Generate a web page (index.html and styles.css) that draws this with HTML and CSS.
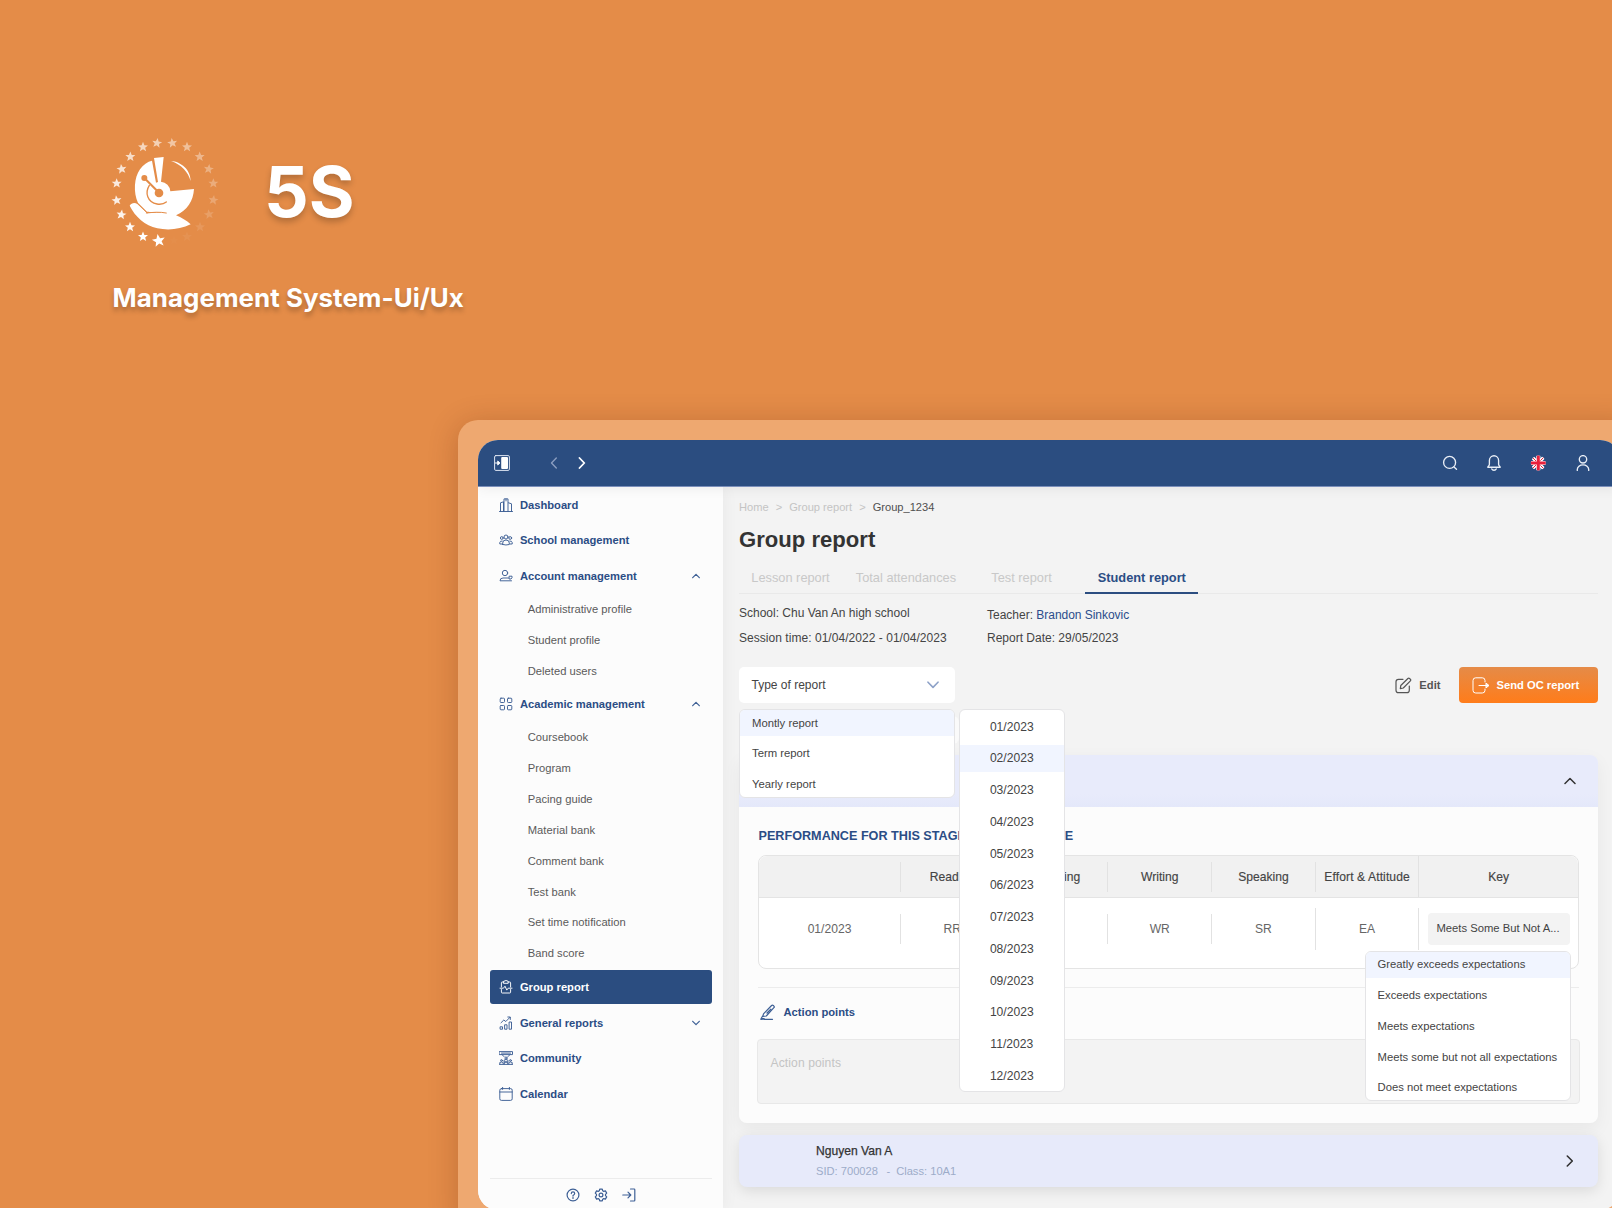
FILE: index.html
```html
<!DOCTYPE html>
<html lang="en">
<head>
<meta charset="utf-8">
<title>5S Management System</title>
<link rel="stylesheet" href="styles.css">
</head>
<body>
<div class="stage">
  <header class="brand">
    <div class="brand-row">
      <svg class="brand-logo" viewBox="0 0 390 375" fill="#fff">
        <defs>
          <path id="star" d="M0-15.500 4.200-5 15-4.700 6.500 2.300 9.400 12.800 0 6.800 -9.400 12.800 -6.500 2.300 -15-4.700 -4.200-5Z"/>
        </defs>
        <use href="#star" transform="translate(171 39) rotate(8)" opacity=".6"/>
        <use href="#star" transform="translate(217 39) rotate(-8)" opacity=".5"/>
        <use href="#star" transform="translate(261 51)" opacity=".45"/>
        <use href="#star" transform="translate(299 80)" opacity=".38"/>
        <use href="#star" transform="translate(326 117) rotate(8)" opacity=".32"/>
        <use href="#star" transform="translate(340 160)" opacity=".28"/>
        <use href="#star" transform="translate(340 210) rotate(8)" opacity=".23"/>
        <use href="#star" transform="translate(327 253) rotate(-8)" opacity=".17"/>
        <use href="#star" transform="translate(300 291)" opacity=".11"/>
        <use href="#star" transform="translate(261 320)" opacity=".06"/>
        <use href="#star" transform="translate(222 331)" opacity=".02"/>
        <use href="#star" transform="translate(176 332) rotate(-10) scale(1.3)"/>
        <use href="#star" transform="translate(129 320)"/>
        <use href="#star" transform="translate(90 291)" opacity=".95"/>
        <use href="#star" transform="translate(64 254) rotate(8)" opacity=".9"/>
        <use href="#star" transform="translate(50 211) rotate(-8)" opacity=".86"/>
        <use href="#star" transform="translate(50 160)" opacity=".82"/>
        <use href="#star" transform="translate(65 117) rotate(-8)" opacity=".77"/>
        <use href="#star" transform="translate(91 80)" opacity=".7"/>
        <use href="#star" transform="translate(129 51)" opacity=".65"/>
        <path d="M162 84 191 81 183 155A31 31 0 0 1 211 184L282 177C280 213 262 241 228 256 244 263 260 272 272 283 242 298 205 302 172 295 135 286 106 261 89 227 94 219 104 217 112 222L141 249 196 246C170 246 150 246 141 245L114 219C100 188 102 143 120 118 129 104 143 95 156 92L168 158 174 156Z"/>
        <path d="M213 93C243 95 272 119 272 153 264 126 245 104 213 93Z"/>
        <g fill="none" stroke="#e48c48">
          <path d="M133 144 175 186" stroke-width="6"/>
          <path d="M148 166C134 188 142 217 171 222 183 224 194 220 199 216" stroke-width="4"/>
          <path d="M139 249C158 247 180 245 199 249" stroke-width="3"/>
          <path d="M114 221 141 249" stroke-width="2.5"/>
        </g>
        <circle cx="133" cy="144" r="9" fill="#e48c48"/>
        <circle cx="177" cy="189" r="13" fill="#e48c48"/>
      </svg>
      <h1 class="brand-name">5S</h1>
    </div>
    <p class="brand-tagline">Management System-Ui/Ux</p>
  </header>

  <div class="device">
    <div class="screen">
      <nav class="topbar">
        <svg class="toggle" viewBox="0 0 16 16"><rect x=".6" y=".6" width="14.8" height="14.8" rx="1.2" fill="none" stroke="#dfe6f2" stroke-width="1"/><rect x="7.2" y="2" width="6.8" height="12" rx="1" fill="#fff"/><path d="M1.5 8h4M4 6.3 5.8 8 4 9.7Z" stroke="#fff" fill="#fff"/></svg>
        <svg class="arrow dim" viewBox="0 0 8 12"><path d="M6.3 1 1.5 6l4.8 5"/></svg>
        <svg class="arrow" viewBox="0 0 8 12"><path d="M1.5 1 6.3 6l-4.8 5"/></svg>
        <div class="topbar-actions">
          <svg viewBox="0 0 16 16"><circle cx="7.6" cy="7.4" r="6"/><path d="m12 12 2.5 2.3"/></svg>
          <svg viewBox="0 0 16 16"><path d="M1.8 12.2c0-.8 1.600-1.500 1.600-3V5.500a4.600 4.800 0 0 1 9.200 0v3.700c0 1.500 1.600 2.200 1.600 3zM5.800 14c.6 1.700 3.800 1.700 4.400 0"/></svg>
          <svg viewBox="0 0 16 16"><defs><clipPath id="disc"><circle cx="8.300" cy="8" r="7.500"/></clipPath></defs><g clip-path="url(#disc)" stroke="none"><path fill="#2b4d80" d="M0 0h16v16H0z"/><path d="m1 1 14 14M15 1 1 15" stroke="#fff" stroke-width="3.400"/><path d="m1 1 14 14M15 1 1 15" stroke="#e8203c" stroke-width="1"/><path d="M8.300 0v16M0 8h16" stroke="#fff" stroke-width="4.200"/><path d="M8.300 0v16M0 8h16" stroke="#e8203c" stroke-width="3"/></g></svg>
          <svg viewBox="0 0 16 16"><circle cx="8" cy="4.300" r="3.700"/><path d="M2.300 15.500v-1a5.700 4.600 0 0 1 11.400 0v1"/></svg>
        </div>
      </nav>

      <div class="layout">
        <aside class="sidebar">
          <a class="item"><svg viewBox="0 0 14 14"><path d="M.5 13.500h13M1.500 13.500V4.800L4.500 3.800v9.700M5 13.500V.900h4v12.600M9.500 4.800l3 1v7.700M7 .9v2"/></svg>Dashboard</a>
          <a class="item"><svg viewBox="0 0 14 14"><circle cx="7" cy="4" r="2"/><circle cx="2.800" cy="5" r="1.400"/><circle cx="11.200" cy="5" r="1.400"/><path d="M3.700 11.500V10a3.300 3 0 0 1 6.600 0v1.500q-3.300 1-6.600 0zM2.800 11H.8V9.500Q1 7.800 3.200 8M11.200 11h2V9.500Q13 7.800 10.800 8"/></svg>School management</a>
          <a class="item"><svg viewBox="0 0 14 14"><circle cx="6" cy="4" r="2.700"/><path d="M9.500 9H4Q1 9 1 11.800h11.500M10.500 7.200h2.500v1.500L12 10h-1.500z"/></svg>Account management<svg class="caret" viewBox="0 0 8 6"><path d="m.7 4.700 3.300-3.400 3.300 3.400"/></svg></a>
          <a class="sub">Administrative profile</a>
          <a class="sub">Student profile</a>
          <a class="sub">Deleted users</a>
          <a class="item"><svg viewBox="0 0 14 14"><rect x="1.200" y="1.200" width="4.300" height="4.300" rx=".8"/><rect x="8.500" y="1.200" width="4.300" height="4.300" rx=".8"/><rect x="1.200" y="8.500" width="4.300" height="4.300" rx=".8"/><rect x="8.500" y="8.500" width="4.300" height="4.300" rx=".8"/></svg>Academic management<svg class="caret" viewBox="0 0 8 6"><path d="m.7 4.700 3.300-3.400 3.300 3.400"/></svg></a>
          <a class="sub">Coursebook</a>
          <a class="sub">Program</a>
          <a class="sub">Pacing guide</a>
          <a class="sub">Material bank</a>
          <a class="sub">Comment bank</a>
          <a class="sub">Test bank</a>
          <a class="sub">Set time notification</a>
          <a class="sub">Band score</a>
          <a class="item active"><svg viewBox="0 0 14 14"><path d="M4.800 2H3.200Q2.400 2 2.400 2.800V7M9.200 2h1.600q.8 0 .8.800V7M2.400 9.500v2.700q0 .8.800.8h7.600q.8 0 .8-.8V9.500M4.800 1.300l2.200-.8 2.200.8v2H4.800zM1 8.200h3.500L6 6.200l1.800 3.900 1.400-1.900H13"/></svg>Group report</a>
          <a class="item"><svg viewBox="0 0 14 14"><path d="M1.500 10.800h2v2.400h-2zM6 8.800h2v4.400H6zM10.500 6h2v7.200h-2zM2 6.800 4.800 4l2 1.500L11 1.300M8.800 1H11.300v2.500"/></svg>General reports<svg class="caret" viewBox="0 0 8 6"><path d="m.7 1.300 3.300 3.400 3.300-3.400"/></svg></a>
          <a class="item"><svg viewBox="0 0 14 14"><path d="M.5.600h13v3H.5zM2.500 2.100h9M3 3.600l2 2M11 3.600l-2 2M.5 13.400h13M5 10.500V9.200q2-1.500 4 0v1.300zM.8 13V11.500q1.700-1 3.400 0V13M5.300 13v-1.500q1.700-1 3.400 0V13M9.800 13v-1.500q1.700-1 3.400 0V13"/><circle cx="7" cy="7" r="1.100"/><circle cx="2.500" cy="9.500" r=".9"/><circle cx="11.500" cy="9.500" r=".9"/></svg>Community</a>
          <a class="item"><svg viewBox="0 0 14 14"><rect x=".8" y="1.600" width="12.400" height="11.800" rx="1.600"/><path d="M.8 5h12.400M3.600.400v2M10.400.400v2"/></svg>Calendar</a>
          <footer class="sidebar-foot">
            <svg viewBox="0 0 14 14"><circle cx="7" cy="7" r="5.900"/><path d="M5.300 5.600q0-1.700 1.700-1.700t1.700 1.600q0 1-1.700 2v.6M7 9.400v1"/></svg>
            <svg viewBox="0 0 14 14"><path d="M5.700 1.200h2.600l.4 1.600 1.100.6 1.600-.5 1.300 2.200-1.200 1.200v1.400l1.200 1.200-1.300 2.200-1.600-.5-1.100.6-.4 1.600H5.700l-.4-1.600-1.100-.6-1.600.5-1.300-2.200 1.200-1.200V6.300L1.300 5.100l1.300-2.200 1.600.5 1.100-.6z"/><circle cx="7" cy="7" r="1.900"/></svg>
            <svg viewBox="0 0 14 14"><path d="M8.500 1h3.600q.7 0 .7.700v10.600q0 .7-.7.700H8.500M.8 7h8M6 4.200 8.800 7 6 9.800"/></svg>
          </footer>
        </aside>

        <main class="content">
          <div class="crumbs"><span>Home</span><span>&gt;</span><span>Group report</span><span>&gt;</span><b>Group_1234</b></div>
          <h2 class="title">Group report</h2>
          <div class="tabs"><a>Lesson report</a><a>Total attendances</a><a>Test report</a><a class="on">Student report</a></div>
          <div class="meta">
            <div><p class="school">School: Chu Van An high school</p><p class="session">Session time: 01/04/2022 - 01/04/2023</p></div>
            <div class="meta-right"><p>Teacher: <a>Brandon Sinkovic</a></p><p>Report Date: 29/05/2023</p></div>
          </div>
          <div class="toolbar">
            <div class="select">Type of report
              <svg viewBox="0 0 12 8"><path d="m1 1.200 5 5.200 5-5.200"/></svg>
              <ul class="menu menu-type"><li class="hot">Montly report</li><li>Term report</li><li>Yearly report</li></ul>
              <ul class="menu menu-month"><li>01/2023</li><li class="hot">02/2023</li><li>03/2023</li><li>04/2023</li><li>05/2023</li><li>06/2023</li><li>07/2023</li><li>08/2023</li><li>09/2023</li><li>10/2023</li><li>11/2023</li><li>12/2023</li></ul>
            </div>
            <a class="edit"><svg viewBox="0 0 17 17"><path d="M8 2.300H3.500Q1 2.300 1 4.800v8.400q0 2.500 2.500 2.500h8.300q2.500 0 2.500-2.500V9M5.800 8.500 12.900 1.500q.8-.8 1.700 0l.8.800q.8.800 0 1.600L8.300 11l-3 .6z"/></svg>Edit</a>
            <a class="send"><svg viewBox="0 0 18 17"><path d="M13 5V3.500Q13 .800 10.300.800H3.700Q1 .8 1 3.500v9.800Q1 16 3.700 16h6.600q2.700 0 2.700-2.700V12M7 8.500h8"/><path d="M14.300 6.300 17 8.500l-2.700 2.200z" fill="#fff"/></svg>Send OC report</a>
          </div>
          <div class="filter"></div>

          <section class="panel">
            <header class="panel-head"><svg viewBox="0 0 12 8"><path d="m1 6.500 5-5 5 5"/></svg></header>
            <div class="panel-body">
              <h3>PERFORMANCE FOR THIS STAGE OF THE COURSE</h3>
              <div class="table">
                <div class="row head"><span></span><span>Reading</span><span>Listening</span><span>Writing</span><span>Speaking</span><span class="full">Effort &amp; Attitude</span><span>Key</span></div>
                <div class="row"><span>01/2023</span><span>RR</span><span>LR</span><span>WR</span><span class="tall">SR</span><span class="tall">EA</span>
                  <div class="key"><div class="chip">Meets Some But Not A...</div>
                    <ul class="menu menu-key"><li class="hot">Greatly exceeds expectations</li><li>Exceeds expectations</li><li>Meets expectations</li><li>Meets some but not all expectations</li><li>Does not meet expectations</li></ul>
                  </div>
                </div>
              </div>
              <h4><svg viewBox="0 0 16 16"><path d="M4 15.300h8.500M.8 15.300l2.400-.1M2.800 11.800 1 14.700h3.200M3.500 9.800 11.600 1.500q.8-.8 1.700 0l.6.600q.8.800 0 1.600L6.300 12l-3.500.300zM7 9l3.800-3.900"/></svg>Action points</h4>
              <div class="textarea">Action points</div>
            </div>
          </section>

          <section class="student">
            <div><p class="name">Nguyen Van A</p><p class="sid">SID: 700028<span>-</span>Class: 10A1</p></div>
            <svg viewBox="0 0 8 12"><path d="m1.300 1 5 5-5 5"/></svg>
          </section>
        </main>
      </div>
    </div>
  </div>
</div>
</body>
</html>
```

FILE: styles.css
```css
* { box-sizing: border-box; margin: 0; padding: 0; }
body { width: 1612px; height: 1208px; overflow: hidden; background: #e48c48; font-family: "Liberation Sans", Arial, sans-serif; color: #333; }
svg { display: block; flex: none; fill: none; stroke-linecap: round; stroke-linejoin: round; }
.stage { width: 1612px; height: 1208px; overflow: hidden; }

.brand { height: 420px; padding: 130px 0 0 100px; color: #fff; font-family: Inter, sans-serif; }
.brand-row { display: flex; height: 125px; }
.brand-logo { width: 130px; height: 125px; fill: #fff; }
.brand-name { margin-left: 34px; font-size: 70px; font-weight: 700; line-height: 124px; text-shadow: 0 4px 6px rgba(0,0,0,.22); }
.brand-tagline { margin: 22px 0 0 12.500px; font-size: 25.900px; font-weight: 700; line-height: 41px; letter-spacing: .05px; text-shadow: 0 4px 5px rgba(0,0,0,.25); white-space: nowrap; }

.device { width: 1182px; height: 810px; margin-left: 458px; padding: 20px; border-radius: 20px; background: #eea870; box-shadow: 0 4px 30px rgba(80,20,0,.24); }
.screen { width: 1142px; height: 770px; border-radius: 20px; overflow: hidden; background: #f3f3f3; }
.topbar { position: relative; z-index: 2; display: flex; align-items: center; height: 47px; padding-left: 16px; background: #2b4d80; border-bottom: 1px solid #7b8fbb; box-shadow: 0 2px 12px rgba(0,0,0,.06); }
.toggle { width: 16px; height: 16px; }
.arrow { width: 8px; height: 12px; margin-left: 19.500px; stroke: #fff; stroke-width: 1.8; }
.arrow.dim { margin-left: 40px; stroke: #8a9dbf; stroke-width: 1.4; }
.topbar-actions { display: flex; gap: 28.2px; margin-left: auto; padding-right: 29.5px; }
.topbar-actions svg { width: 16px; height: 16px; stroke: #e9eef6; stroke-width: 1.35; }

.layout { display: flex; height: 723px; }
.sidebar { z-index: 1; width: 245px; padding: 0 11.500px 0 12px; display: flex; flex-direction: column; background: #fcfcfc; color: #2b4d85; box-shadow: 0 0 16px rgba(0,0,0,.05); }
.item { display: flex; align-items: center; flex: none; height: 35.6px; padding: 0 12px 0 8.700px; font-size: 11.2px; font-weight: 700; }
.item svg { width: 14px; height: 14px; margin-right: 7.200px; stroke: #3d5f95; stroke-width: .95; }
.item .caret { width: 8px; height: 6px; margin: 0 0 0 auto; stroke-width: 1.2; }
.item.active { height: 34.6px; margin: .5px 0; border-radius: 3px; background: #2b4d80; color: #fff; }
.item.active svg { stroke: #fff; }
.sub { flex: none; height: 30.9px; padding-left: 37.700px; font-size: 11.2px; line-height: 31.800px; color: #5a5a5a; letter-spacing: .02px; }
.sidebar-foot { display: flex; justify-content: center; gap: 14px; height: 32px; margin-top: auto; padding-top: 9px; border-top: 1px solid #ececec; }
.sidebar-foot svg { width: 14px; height: 14px; stroke: #3d5f95; stroke-width: 1.2; }

.content { flex: 1; padding: 10px 22px 0 16px; }
.crumbs { display: flex; gap: 7px; height: 20px; font-size: 11.12px; line-height: 20px; color: #c4c4c4; }
.crumbs b { font-weight: 400; color: #4f4f4f; }
.title { height: 28px; margin-top: 8px; font-size: 22.1px; line-height: 29px; }
.tabs { display: grid; grid-template-columns: 104.5px 135.5px 94px 113px; height: 41px; padding-left: 12.300px; border-bottom: 1px solid #e9e9e9; font-size: 12.8px; line-height: 49px; color: #c8c8c8; }
.tabs .on { height: 41px; border-bottom: 2px solid #2b4d80; line-height: 50px; text-align: center; font-weight: 700; color: #2b4d85; }
.meta { display: flex; height: 73px; padding-top: 9px; font-size: 12px; line-height: 20px; color: #444; }
.meta > div { width: 248px; }
.meta p { height: 20px; margin-bottom: 5px; white-space: nowrap; }
.meta .school { letter-spacing: 0; }
.meta .session { letter-spacing: .04px; }
.meta-right p { margin: 2px 0; }
.meta-right p:last-child { margin-top: 3px; }
.meta a { color: #2b4d8c; letter-spacing: -.04px; }
.toolbar { display: flex; align-items: center; height: 36px; font-size: 11.200px; }
.select { position: relative; z-index: 3; display: flex; align-items: center; justify-content: space-between; width: 216px; height: 36px; padding: 0 16.500px 0 12.500px; border-radius: 5px; background: #fff; font-size: 12px; color: #444; }
.select > svg { width: 12px; height: 8px; stroke: #8ea2c8; stroke-width: 1.6; }
.menu { position: absolute; list-style: none; overflow: hidden; border: 1px solid #e4e4e6; border-radius: 6px; background: #fff; font-size: 11.300px; color: #444; }
.menu li { height: 30.9px; padding-left: 12px; line-height: 31.400px; white-space: nowrap; }
.menu .hot { height: 26px; background: #f1f5ff; line-height: 25px; }
.menu-type { top: 42px; left: 0; width: 216px; height: 89px; }
.menu-type .hot { line-height: 26px; }
.menu-type .hot, .menu-key .hot { margin-bottom: 2.300px; }
.menu-month { top: 42px; left: 220px; width: 105.500px; height: 383px; font-size: 12.1px; text-align: center; }
.menu-month li { height: 31.7px; padding: 0; line-height: 32px; }
.menu-month li:first-child { margin-top: 1px; }
.menu-month .hot { height: 27.7px; margin: 2px 0; line-height: 27.700px; }
.edit { display: flex; align-items: center; gap: 7.500px; margin-left: auto; font-weight: 700; color: #555; }
.edit svg { width: 17px; height: 17px; stroke: #555; stroke-width: 1.2; }
.send { display: flex; align-items: center; gap: 7px; width: 139.500px; height: 36px; margin-left: 18px; padding-left: 13px; border-radius: 4px; background: linear-gradient(#e58b48, #ff7c1a); font-weight: 700; color: #fff; }
.send svg { width: 18px; height: 17px; stroke: #fff; stroke-width: 1; }
.filter { width: 220px; height: 28px; margin: 12.500px 0 11.500px; border-radius: 6px; background: #fafafa; }

.panel { border-radius: 8px; box-shadow: 0 6px 18px rgba(0,0,0,.05); }
.panel-head { display: flex; align-items: center; justify-content: flex-end; height: 52px; padding-right: 22px; border-radius: 8px 8px 0 0; background: linear-gradient(#e8ebfb 75%, #e4e8fa); }
.panel-head svg { width: 12px; height: 8px; stroke: #333; stroke-width: 1.5; }
.panel-body { height: 316px; padding: 19px 19px 0 19px; border-radius: 0 0 8px 8px; background: #fcfcfc; }
.panel h3 { height: 29px; padding-left: .5px; font-size: 12.640px; line-height: 20px; color: #2b4d85; }
.table { height: 114px; border: 1px solid #e4e4e4; border-radius: 8px; background: #fff; }
.row { display: grid; grid-template-columns: 142px repeat(5, 103.700px) 1fr; align-items: center; height: 61px; font-size: 12.1px; color: #666; }
.row > span { height: 30px; border-right: 1px solid #e2e2e2; line-height: 31px; text-align: center; }
.row > span:last-child { border: 0; }
.row > .tall { height: 42px; line-height: 43px; }
.row.head { height: 42px; border-bottom: 1px solid #e4e4e4; border-radius: 8px 8px 0 0; background: #f1f1f1; color: #444; -webkit-text-stroke: .15px #444; }
.row.head .full { height: 41px; line-height: 42px; letter-spacing: .1px; white-space: nowrap; }
.key { position: relative; padding-left: 9px; }
.chip { width: 142px; height: 32px; padding-left: 8px; border-radius: 4px; background: #f3f3f3; font-size: 11.250px; line-height: 31px; color: #444; white-space: nowrap; }
.menu-key { top: 38px; right: 7.500px; width: 206px; height: 150.500px; font-size: 11.280px; }
.panel h4 { display: flex; align-items: center; gap: 8px; height: 52px; margin-top: 18px; padding: 0 0 3px 1.500px; border-top: 1px solid #ececec; font-size: 11.200px; color: #2b4d85; }
.panel h4 svg { width: 16px; height: 16px; stroke: #3d5f95; stroke-width: 1.2; }
.textarea { height: 65px; margin: 0 -1px 0 -1.500px; padding: 13px 13px 0; border: 1px solid #e8e8e8; border-radius: 4px; background: #f3f3f3; font-size: 12.100px; line-height: 20px; letter-spacing: .1px; color: #c4c4c4; }
.student { display: flex; align-items: center; justify-content: space-between; height: 52px; margin-top: 12px; padding: 0 24px 0 77px; border-radius: 8px; background: #e7eafa; box-shadow: 0 4px 14px rgba(0,0,0,.1); }
.student p { height: 20px; line-height: 21px; white-space: nowrap; }
.student .name { font-size: 12.100px; color: #333; -webkit-text-stroke: .25px #333; }
.student .sid { font-size: 11.150px; color: #9dacc9; }
.sid span { margin: 0 6px 0 8.500px; }
.student svg { width: 8px; height: 12px; stroke: #333; stroke-width: 1.6; }
```
